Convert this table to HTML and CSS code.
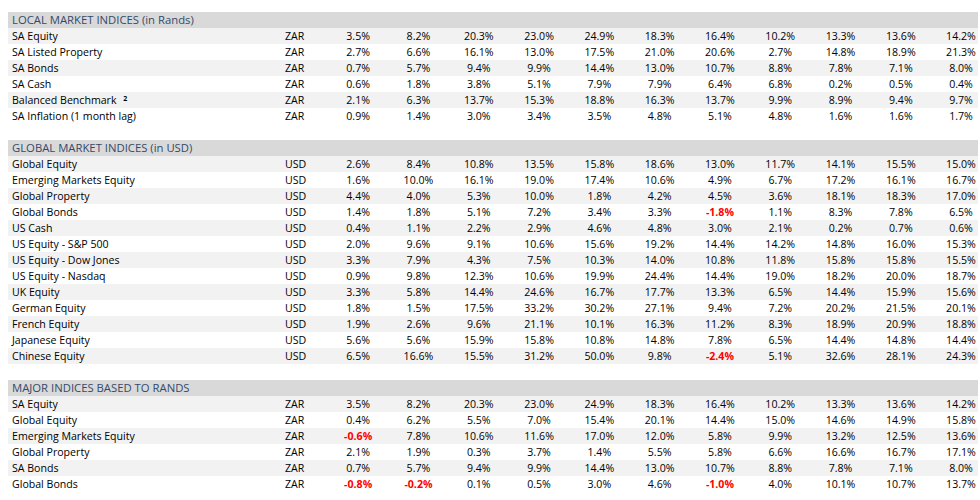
FILE: index.html
```html
<!DOCTYPE html>
<html>
<head>
<meta charset="utf-8">
<link rel="stylesheet" href="styles.css">
</head>
<body>
<div class="sheet">
  <section class="block">
    <div class="head">LOCAL MARKET INDICES (in Rands)</div>
    <div class="row"><span class="name">SA Equity</span><span class="cur">ZAR</span><span>3.5%</span><span>8.2%</span><span>20.3%</span><span>23.0%</span><span>24.9%</span><span>18.3%</span><span>16.4%</span><span>10.2%</span><span>13.3%</span><span>13.6%</span><span class="last">14.2%</span></div>
    <div class="row"><span class="name">SA Listed Property</span><span class="cur">ZAR</span><span>2.7%</span><span>6.6%</span><span>16.1%</span><span>13.0%</span><span>17.5%</span><span>21.0%</span><span>20.6%</span><span>2.7%</span><span>14.8%</span><span>18.9%</span><span class="last">21.3%</span></div>
    <div class="row"><span class="name">SA Bonds</span><span class="cur">ZAR</span><span>0.7%</span><span>5.7%</span><span>9.4%</span><span>9.9%</span><span>14.4%</span><span>13.0%</span><span>10.7%</span><span>8.8%</span><span>7.8%</span><span>7.1%</span><span class="last">8.0%</span></div>
    <div class="row"><span class="name">SA Cash</span><span class="cur">ZAR</span><span>0.6%</span><span>1.8%</span><span>3.8%</span><span>5.1%</span><span>7.9%</span><span>7.9%</span><span>6.4%</span><span>6.8%</span><span>0.2%</span><span>0.5%</span><span class="last">0.4%</span></div>
    <div class="row"><span class="name">Balanced Benchmark <sup class="note">2</sup></span><span class="cur">ZAR</span><span>2.1%</span><span>6.3%</span><span>13.7%</span><span>15.3%</span><span>18.8%</span><span>16.3%</span><span>13.7%</span><span>9.9%</span><span>8.9%</span><span>9.4%</span><span class="last">9.7%</span></div>
    <div class="row"><span class="name">SA Inflation (1 month lag)</span><span class="cur">ZAR</span><span>0.9%</span><span>1.4%</span><span>3.0%</span><span>3.4%</span><span>3.5%</span><span>4.8%</span><span>5.1%</span><span>4.8%</span><span>1.6%</span><span>1.6%</span><span class="last">1.7%</span></div>
  </section>
  <section class="block">
    <div class="head">GLOBAL MARKET INDICES (in USD)</div>
    <div class="row"><span class="name">Global Equity</span><span class="cur">USD</span><span>2.6%</span><span>8.4%</span><span>10.8%</span><span>13.5%</span><span>15.8%</span><span>18.6%</span><span>13.0%</span><span>11.7%</span><span>14.1%</span><span>15.5%</span><span class="last">15.0%</span></div>
    <div class="row"><span class="name">Emerging Markets Equity</span><span class="cur">USD</span><span>1.6%</span><span>10.0%</span><span>16.1%</span><span>19.0%</span><span>17.4%</span><span>10.6%</span><span>4.9%</span><span>6.7%</span><span>17.2%</span><span>16.1%</span><span class="last">16.7%</span></div>
    <div class="row"><span class="name">Global Property</span><span class="cur">USD</span><span>4.4%</span><span>4.0%</span><span>5.3%</span><span>10.0%</span><span>1.8%</span><span>4.2%</span><span>4.5%</span><span>3.6%</span><span>18.1%</span><span>18.3%</span><span class="last">17.0%</span></div>
    <div class="row"><span class="name">Global Bonds</span><span class="cur">USD</span><span>1.4%</span><span>1.8%</span><span>5.1%</span><span>7.2%</span><span>3.4%</span><span>3.3%</span><span class="neg">-1.8%</span><span>1.1%</span><span>8.3%</span><span>7.8%</span><span class="last">6.5%</span></div>
    <div class="row"><span class="name">US Cash</span><span class="cur">USD</span><span>0.4%</span><span>1.1%</span><span>2.2%</span><span>2.9%</span><span>4.6%</span><span>4.8%</span><span>3.0%</span><span>2.1%</span><span>0.2%</span><span>0.7%</span><span class="last">0.6%</span></div>
    <div class="row"><span class="name">US Equity - S&amp;P 500</span><span class="cur">USD</span><span>2.0%</span><span>9.6%</span><span>9.1%</span><span>10.6%</span><span>15.6%</span><span>19.2%</span><span>14.4%</span><span>14.2%</span><span>14.8%</span><span>16.0%</span><span class="last">15.3%</span></div>
    <div class="row"><span class="name">US Equity - Dow Jones</span><span class="cur">USD</span><span>3.3%</span><span>7.9%</span><span>4.3%</span><span>7.5%</span><span>10.3%</span><span>14.0%</span><span>10.8%</span><span>11.8%</span><span>15.8%</span><span>15.8%</span><span class="last">15.5%</span></div>
    <div class="row"><span class="name">US Equity - Nasdaq</span><span class="cur">USD</span><span>0.9%</span><span>9.8%</span><span>12.3%</span><span>10.6%</span><span>19.9%</span><span>24.4%</span><span>14.4%</span><span>19.0%</span><span>18.2%</span><span>20.0%</span><span class="last">18.7%</span></div>
    <div class="row"><span class="name">UK Equity</span><span class="cur">USD</span><span>3.3%</span><span>5.8%</span><span>14.4%</span><span>24.6%</span><span>16.7%</span><span>17.7%</span><span>13.3%</span><span>6.5%</span><span>14.4%</span><span>15.9%</span><span class="last">15.6%</span></div>
    <div class="row"><span class="name">German Equity</span><span class="cur">USD</span><span>1.8%</span><span>1.5%</span><span>17.5%</span><span>33.2%</span><span>30.2%</span><span>27.1%</span><span>9.4%</span><span>7.2%</span><span>20.2%</span><span>21.5%</span><span class="last">20.1%</span></div>
    <div class="row"><span class="name">French Equity</span><span class="cur">USD</span><span>1.9%</span><span>2.6%</span><span>9.6%</span><span>21.1%</span><span>10.1%</span><span>16.3%</span><span>11.2%</span><span>8.3%</span><span>18.9%</span><span>20.9%</span><span class="last">18.8%</span></div>
    <div class="row"><span class="name">Japanese Equity</span><span class="cur">USD</span><span>5.6%</span><span>5.6%</span><span>15.9%</span><span>15.8%</span><span>10.8%</span><span>14.8%</span><span>7.8%</span><span>6.5%</span><span>14.4%</span><span>14.8%</span><span class="last">14.4%</span></div>
    <div class="row"><span class="name">Chinese Equity</span><span class="cur">USD</span><span>6.5%</span><span>16.6%</span><span>15.5%</span><span>31.2%</span><span>50.0%</span><span>9.8%</span><span class="neg">-2.4%</span><span>5.1%</span><span>32.6%</span><span>28.1%</span><span class="last">24.3%</span></div>
  </section>
  <section class="block">
    <div class="head">MAJOR INDICES BASED TO RANDS</div>
    <div class="row"><span class="name">SA Equity</span><span class="cur">ZAR</span><span>3.5%</span><span>8.2%</span><span>20.3%</span><span>23.0%</span><span>24.9%</span><span>18.3%</span><span>16.4%</span><span>10.2%</span><span>13.3%</span><span>13.6%</span><span class="last">14.2%</span></div>
    <div class="row"><span class="name">Global Equity</span><span class="cur">ZAR</span><span>0.4%</span><span>6.2%</span><span>5.5%</span><span>7.0%</span><span>15.4%</span><span>20.1%</span><span>14.4%</span><span>15.0%</span><span>14.6%</span><span>14.9%</span><span class="last">15.8%</span></div>
    <div class="row"><span class="name">Emerging Markets Equity</span><span class="cur">ZAR</span><span class="neg">-0.6%</span><span>7.8%</span><span>10.6%</span><span>11.6%</span><span>17.0%</span><span>12.0%</span><span>5.8%</span><span>9.9%</span><span>13.2%</span><span>12.5%</span><span class="last">13.6%</span></div>
    <div class="row"><span class="name">Global Property</span><span class="cur">ZAR</span><span>2.1%</span><span>1.9%</span><span>0.3%</span><span>3.7%</span><span>1.4%</span><span>5.5%</span><span>5.8%</span><span>6.6%</span><span>16.6%</span><span>16.7%</span><span class="last">17.1%</span></div>
    <div class="row"><span class="name">SA Bonds</span><span class="cur">ZAR</span><span>0.7%</span><span>5.7%</span><span>9.4%</span><span>9.9%</span><span>14.4%</span><span>13.0%</span><span>10.7%</span><span>8.8%</span><span>7.8%</span><span>7.1%</span><span class="last">8.0%</span></div>
    <div class="row"><span class="name">Global Bonds</span><span class="cur">ZAR</span><span class="neg">-0.8%</span><span class="neg">-0.2%</span><span>0.1%</span><span>0.5%</span><span>3.0%</span><span>4.6%</span><span class="neg">-1.0%</span><span>4.0%</span><span>10.1%</span><span>10.7%</span><span class="last">13.7%</span></div>
  </section>
</div>
</body>
</html>
```

FILE: styles.css
```css
html, body {
  margin: 0;
  padding: 0;
  background: #ffffff;
}
body {
  padding: 12px 2px 0 8px;
  font-family: "Open Sans", "Noto Sans", sans-serif;
  font-size: 10.6px;
  color: #000000;
  overflow: hidden;
}
.sheet {
  display: flex;
  flex-direction: column;
  gap: 16px;
  width: 970px;
}
.block {
  display: flex;
  flex-direction: column;
}
.head {
  height: 16px;
  line-height: 16px;
  background: #d9d9d9;
  color: #34496a;
  padding-left: 4px;
  font-size: 11.3px;
  white-space: nowrap;
}
.row {
  display: grid;
  grid-template-columns: 273px 43px repeat(10, 60.3px) 46px;
  height: 16px;
  line-height: 16px;
  padding-left: 4px;
  white-space: nowrap;
}
.row:nth-child(even) {
  background: #f2f2f2;
}
.row span {
  text-align: center;
}
.row .name,
.row .cur {
  text-align: left;
}
.row .last {
  padding-left: 14px;
}
.neg {
  color: #ff0000;
  font-weight: 700;
}
.note {
  font-size: 7px;
  font-weight: 700;
  vertical-align: 3px;
  line-height: 0;
  margin-left: 4px;
}
```
